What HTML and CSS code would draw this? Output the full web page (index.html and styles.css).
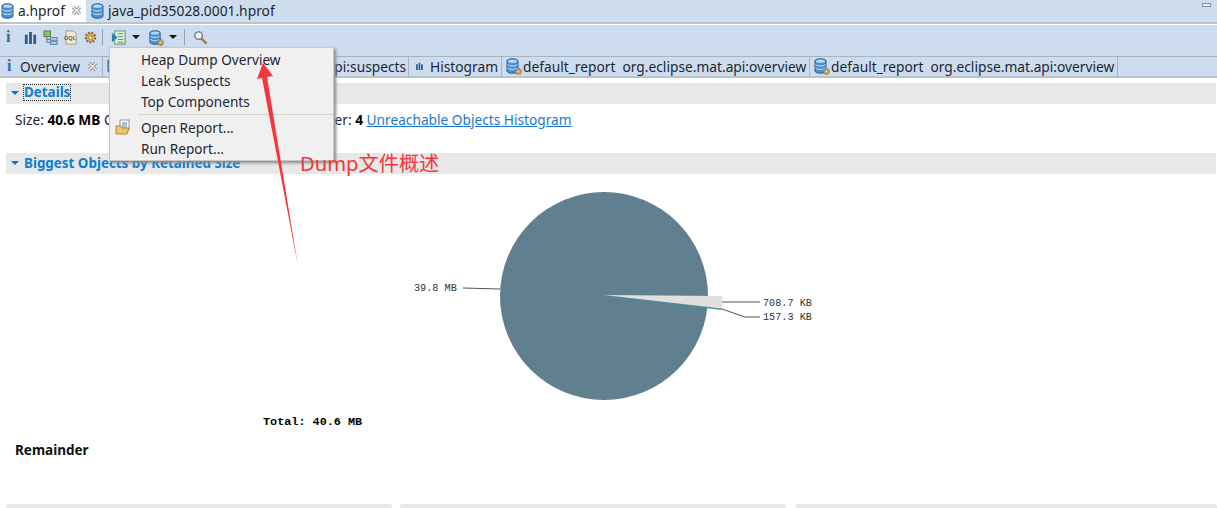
FILE: index.html
```html
<!DOCTYPE html>
<html lang="en">
<head>
    <meta charset="UTF-8">
    <title>Memory Analyzer</title>
    <link rel="stylesheet" href="styles.css">
</head>
<body>
<svg class="defs" width="0" height="0">
    <symbol id="db" viewBox="0 0 16 16">
        <path d="M2 3c0-3 11-3 11 0v10c0 3-11 3-11 0z" fill="#4a90d0" stroke="#2a5f96"/>
        <ellipse cx="7.5" cy="3.2" rx="4.5" ry="1.6" fill="#b5d8f2"/>
        <path d="M2.5 6.5c2 2 8 2 10 0M2.5 10c2 2 8 2 10 0" fill="none" stroke="#d5e8f7"/>
    </symbol>
    <symbol id="gear" viewBox="0 0 16 16">
        <circle cx="8" cy="8" r="5" fill="#e0b060" stroke="#8a6a3a" stroke-width="2.4" stroke-dasharray="2 1.4"/>
        <circle cx="8" cy="8" r="2" fill="#f4ecd8" stroke="#8a6a3a" stroke-width=".8"/>
    </symbol>
    <symbol id="bars" viewBox="0 0 16 16">
        <path d="M2 5h3v10H2zM6.500 2h3v13h-3zM11 5h3v10h-3z" fill="#2f5c8a"/>
    </symbol>
    <symbol id="cross" viewBox="0 0 11 11">
        <path d="M2 2l7 7M9 2l-7 7" stroke="#8f9499" stroke-width="3.200"/>
        <path d="M2 2l7 7M9 2l-7 7" stroke="#f4f4f4" stroke-width="1.400"/>
    </symbol>
</svg>

<div class="editor-tabs">
    <div class="editor-tab active">
        <svg class="icon"><use href="#db"/></svg>
        <span>a.hprof</span>
        <svg class="close"><use href="#cross"/></svg>
    </div>
    <div class="editor-tab">
        <svg class="icon"><use href="#db"/></svg>
        <span>java_pid35028.0001.hprof</span>
    </div>
    <div class="minimize"></div>
</div>

<div class="toolbar">
    <span class="info">i</span>
    <svg class="tool"><use href="#bars"/></svg>
    <svg class="tool" viewBox="0 0 16 16">
        <rect x="1" y="1" width="7" height="6" fill="#8cc06a" stroke="#4b7f3a"/>
        <path d="M4 7v6h4M4 10h4" fill="none" stroke="#667"/>
        <rect x="8" y="8" width="7" height="3.500" fill="#a8c8e4" stroke="#5a85ad"/>
        <rect x="8" y="12" width="7" height="3.500" fill="#a8c8e4" stroke="#5a85ad"/>
    </svg>
    <svg class="tool" viewBox="0 0 16 16">
        <path d="M3 1h8l3 3v11H3z" fill="#f2e6cf" stroke="#a89a80"/>
        <text x="1" y="11" class="oql">OQL</text>
    </svg>
    <svg class="tool"><use href="#gear"/></svg>
    <span class="sep"></span>
    <svg class="tool" viewBox="0 0 16 16">
        <rect x="4" y="1" width="11" height="14" fill="#e6f2e0" stroke="#5f8a68"/>
        <path d="M7 4h6M7 7h6M7 10h6M7 13h6" stroke="#4a9a5a"/>
        <path d="M1 3l6 5-6 5z" fill="#2f7fb8"/>
    </svg>
    <span class="caret"></span>
    <span class="stack"><svg class="tool"><use href="#db"/></svg><svg class="badge"><use href="#gear"/></svg></span>
    <span class="caret"></span>
    <span class="sep"></span>
    <svg class="tool" viewBox="0 0 16 16">
        <circle cx="6" cy="6" r="4" fill="#eef4f8" stroke="#6d7378" stroke-width="1.500"/>
        <path d="M9 9l5.500 5.500" stroke="#9a7a4a" stroke-width="2.400"/>
    </svg>
</div>

<div class="view-tabs">
    <div class="view-tab first">
        <span class="info">i</span>
        <span>Overview</span>
        <svg class="close"><use href="#cross"/></svg>
    </div>
    <div class="view-tab suspects">
        <svg class="icon"><use href="#db"/></svg>
        <span>default_report&nbsp; org.eclipse.mat.api:suspects</span>
    </div>
    <div class="view-tab histogram">
        <svg class="tab-bars"><use href="#bars"/></svg>
        <span>Histogram</span>
    </div>
    <div class="view-tab report">
        <span class="stack"><svg class="icon"><use href="#db"/></svg><svg class="badge"><use href="#gear"/></svg></span>
        <span>default_report&nbsp; org.eclipse.mat.api:overview</span>
    </div>
    <div class="view-tab report">
        <span class="stack"><svg class="icon"><use href="#db"/></svg><svg class="badge"><use href="#gear"/></svg></span>
        <span>default_report&nbsp; org.eclipse.mat.api:overview</span>
    </div>
</div>

<div class="content">
    <div class="section-head">
        <span class="twisty"></span>
        <span class="focus">Details</span>
    </div>
    <p class="details">Size: <b>40.6 MB</b> Classes: <b>10k</b> Objects: <b>1m</b> Class Loader: <b>4</b> <a href="#">Unreachable Objects Histogram</a></p>
    <div class="section-head">
        <span class="twisty"></span>
        <span>Biggest Objects by Retained Size</span>
    </div>
    <svg class="chart" width="1217" height="242" viewBox="0 173 1217 242">
        <circle cx="604" cy="296" r="104" fill="#607f8f"/>
        <path d="M604 296L722 308V310z" fill="#4f8f96"/>
        <path d="M604 295L722 296V308.500z" fill="#e0e0e0"/>
        <path d="M500 289L463 288M722 302H760M722 309L745 317H760" fill="none" stroke="#555"/>
        <text x="414" y="291">39.8 MB</text>
        <text x="763" y="306">708.7 KB</text>
        <text x="763" y="320">157.3 KB</text>
    </svg>
    <div class="total">Total: 40.6 MB</div>
    <div class="remainder">Remainder</div>
    <div class="panels">
        <div class="panel"></div>
        <div class="panel"></div>
        <div class="panel"></div>
    </div>
</div>

<div class="menu">
    <div class="menu-item">Heap Dump Overview</div>
    <div class="menu-item">Leak Suspects</div>
    <div class="menu-item">Top Components</div>
    <div class="menu-line"></div>
    <div class="menu-item">
        <svg class="menu-icon" viewBox="0 0 16 16">
            <rect x="5" y="1" width="9" height="10" fill="#fff" stroke="#8a94a6"/>
            <path d="M7 4h5M7 6h5M7 8h5" stroke="#5a7fb0"/>
            <path d="M1 7h5l1 2h7l-2 6H1z" fill="#eec46e" stroke="#b08a3c"/>
        </svg>
        Open Report...
    </div>
    <div class="menu-item">Run Report...</div>
</div>

<svg class="arrow" width="320" height="220" viewBox="0 0 320 220">
    <path d="M263 63L273 76L267 77L298 266L262 78L257 79z" transform="translate(0 -50)" fill="#f8353b"/>
</svg>
<div class="note">Dump文件概述</div>
</body>
</html>
```

FILE: styles.css
```css
*{ margin:0; padding:0; box-sizing:border-box;}
html,body{ width:1217px; height:508px; overflow:hidden; background:#fff;}
body{ position:relative; font-family:"Noto Sans","Noto Sans CJK SC",sans-serif; font-size:13.8px; color:#1d2733;}
.defs{ position:absolute;}
.icon{ width:16px; height:16px; flex:none;}
.close{ width:11px; height:11px; flex:none;}

.editor-tabs{ display:flex; height:24px; background:#cfdeee; border-bottom:2px solid #b9c3cc; position:relative;}
.editor-tab{ display:flex; align-items:center; gap:2px; padding:0 3px 1px 4px; height:22px;}
.editor-tab.active{ background:#fff; width:86px; padding-left:0;}
.editor-tab.active .close{ margin-left:4px;}
.minimize{ position:absolute; right:6px; top:3px; width:9px; height:4px; border:1px solid #8c929a; background:#eee;}

.toolbar{ display:flex; align-items:center; height:31px; margin-top:1px; background:#cddcee; padding:0 0 7px 6px;}
.info{ font-family:"Liberation Serif",serif; font-weight:bold; font-size:16px; color:#2c6aa0; width:6px;}
.toolbar .info{ margin-right:6px;}
.tool{ width:15px; height:15px; margin-left:5px; flex:none;}
.oql{ font-family:"Liberation Sans",sans-serif; font-size:6px; font-weight:bold; fill:#55607a;}
.sep{ width:1px; height:16px; background:#93a2b0; margin-left:4px; margin-right:3px;}
.caret{ width:0; height:0; margin-left:6px; margin-right:3px; border:4px solid transparent; border-top:4px solid #111; border-bottom:0;}
.stack{ position:relative; display:flex; flex:none;}
.badge{ position:absolute; right:-2px; bottom:-2px; width:9px; height:9px;}

.view-tabs{ display:flex; height:22px; background:#cddcee; border-top:1px solid #a9b4bf; border-bottom:2px solid #b9c3cc; font-size:13.750px;}
.view-tab{ display:flex; align-items:center; gap:2px; height:20px; padding:0 3px 2px; border-right:1px solid #a9b4bf; white-space:nowrap;}
.view-tab.first{ width:103px; padding-left:7px; gap:7px;}
.view-tab.suspects{ width:306px;}
.view-tab.histogram{ width:93px; padding-left:6px;}
.view-tab.report{ width:308px;}
.tab-bars{ width:12px; height:12px; margin-right:4px;}

.content{ padding:5px 0 0 6px;}
.section-head{ display:flex; align-items:center; height:21px; padding:0 0 2px 5px; gap:5px; width:1210px; background:#e8e8e8; color:#0b7fd6; font-weight:bold; font-size:13.4px;}
.twisty{ width:0; height:0; border:4px solid transparent; border-top:4px solid #1a6fc0; border-bottom:0;}
.focus{ outline:1px dotted #333; line-height:15px;}
.details{ margin:6px 0 23px 9px; height:20px; line-height:20px; white-space:nowrap; font-size:13.700px;}
.details b{ color:#000;}
.details a{ color:#1a78d0;}
.chart{ display:block; margin-left:-6px; margin-top:-1px;}
.chart text{ font-family:"Liberation Mono",monospace; font-size:10.200px; fill:#333;}
.total{ margin-left:257px; height:14px; font-family:"Liberation Mono",monospace; font-size:11.800px; font-weight:bold; color:#000; line-height:14px;}
.remainder{ margin:12px 0 0 9px; font-weight:bold; color:#111; font-size:13.500px; line-height:18px;}
.panels{ display:flex; gap:8px; margin-top:45px;}
.panel{ width:386px; height:10px; background:#e8e8e8; border-radius:3px 3px 0 0;}
.panel + .panel + .panel{ margin-left:2px; width:421px;}

.menu{ position:absolute; left:109px; top:47px; width:225px; height:114px; padding:1px 0; background:#f0f0f0; border:1px solid #c8c8c8; box-shadow:2px 2px 3px #888; font-size:13.600px;}
.menu-item{ position:relative; height:21px; line-height:21px; padding-left:31px; white-space:nowrap;}
.menu-line{ height:1px; background:#d4d4d4; margin:2px 0 2px 28px;}
.menu-icon{ position:absolute; left:5px; top:2px; width:16px; height:16px;}

.arrow{ position:absolute; left:0; top:50px; pointer-events:none;}
.note{ position:absolute; left:300px; top:148px; font-size:20.200px; line-height:30px; color:#f5353b; white-space:nowrap;}
```
